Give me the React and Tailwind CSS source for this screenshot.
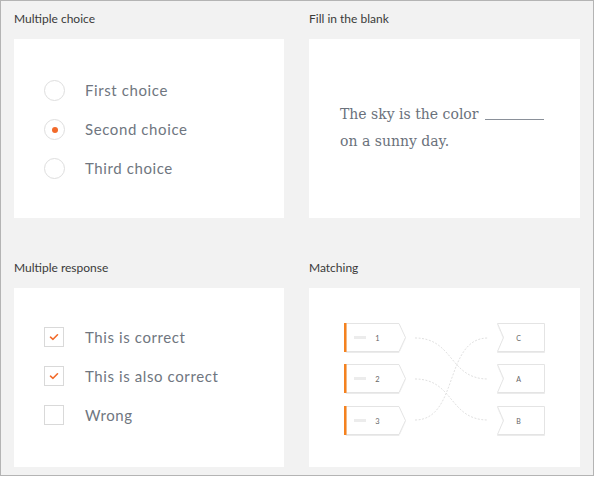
const LEFT = [
  { n: '1', y: 35 },
  { n: '2', y: 76 },
  { n: '3', y: 118 },
]
const RIGHT = [
  { l: 'C', y: 35 },
  { l: 'A', y: 76 },
  { l: 'B', y: 118 },
]

function Title({ children }) {
  return <div className="h-5 leading-5 text-[12px] text-[#3a3a3a] mb-[10px]">{children}</div>
}

function Panel({ children, className = '' }) {
  return <div className={'bg-white h-[179px] ' + className}>{children}</div>
}

function Radio({ checked }) {
  return (
    <span className="w-[21px] h-[21px] rounded-full border-[1.5px] border-[#dedede] flex items-center justify-center shrink-0">
      {checked && <span className="w-[6px] h-[6px] rounded-full bg-[#f26a2a]" />}
    </span>
  )
}

function Check({ checked }) {
  return (
    <span className="w-[20px] h-[20px] border border-[#d9d9d9] flex items-center justify-center shrink-0">
      {checked && (
        <svg width="10" height="8" viewBox="0 0 10 8">
          <path d="M1.5 4.2 L4 6.3 L8.5 1.8" fill="none" stroke="#f26a2a" strokeWidth="1.6" strokeLinecap="round" strokeLinejoin="round" />
        </svg>
      )}
    </span>
  )
}

function Matching() {
  return (
    <svg width="271" height="180" viewBox="0 0 271 180" className="block">
      <defs>
        <filter id="sh" x="-20%" y="-20%" width="140%" height="160%">
          <feDropShadow dx="0" dy="1" stdDeviation="0.6" floodColor="#000" floodOpacity="0.08" />
        </filter>
      </defs>
      {/* connectors */}
      <g fill="none" stroke="#dcdcdc" strokeWidth="0.9" strokeDasharray="2 1.5">
        <path d="M106 50 C 145 50, 140 91, 179 91" />
        <path d="M106 91 C 145 91, 140 132, 179 132" />
        <path d="M106 132 C 150 132, 135 50, 179 50" />
      </g>
      {LEFT.map(({ n, y }) => (
        <g key={n}>
          <path
            d={`M37 ${y + 0.5} H90 L96.5 ${y + 14.5} L90 ${y + 28.5} H37 Z`}
            fill="#fff"
            stroke="#e4e4e4"
            filter="url(#sh)"
          />
          <rect x="35" y={y} width="2.5" height="29" fill="#f5821f" />
          <rect x="45" y={y + 13} width="12" height="3" fill="#ececec" />
          <text x="68.5" y={y + 18} fontSize="7.5" fill="#666" textAnchor="middle" fontFamily="Lato, sans-serif">{n}</text>
        </g>
      ))}
      {RIGHT.map(({ l, y }) => (
        <g key={l}>
          <path
            d={`M188.5 ${y + 0.5} H235.5 V${y + 28.5} H188.5 L194.5 ${y + 14.5} Z`}
            fill="#fff"
            stroke="#e4e4e4"
            filter="url(#sh)"
          />
          <text x="209.5" y={y + 17.5} fontSize="7" fill="#666" textAnchor="middle" fontFamily="Lato, sans-serif">{l}</text>
        </g>
      ))}
    </svg>
  )
}

export default function App() {
  return (
    <div className="w-[595px] h-[477px] bg-white">
      <div
        className="w-[594px] h-[476px] border border-[#b4b4b4] bg-[#f2f2f2] pl-[13px] pt-[8px] grid grid-cols-[270px_271px] gap-x-[25px] gap-y-[40px] content-start"
        style={{ fontFamily: 'Lato, "Open Sans", sans-serif' }}
      >
        <div>
          <Title>Multiple choice</Title>
          <Panel className="pl-[30px] pt-[41px] flex flex-col gap-[18px]">
            {['First choice', 'Second choice', 'Third choice'].map((t, i) => (
              <div key={t} className="flex items-center gap-[20px] h-[21px]">
                <Radio checked={i === 1} />
                <span className="text-[15px] text-[#6f7680] tracking-[0.6px]">{t}</span>
              </div>
            ))}
          </Panel>
        </div>

        <div>
          <Title>Fill in the blank</Title>
          <Panel className="pl-[31px] pt-[62px]">
            <div className="text-[14px] leading-[27px] text-[#6a717b]" style={{ fontFamily: '"DejaVu Serif", serif' }}>
              <div className="flex items-end">
                <span>The sky is the color</span>
                <span className="ml-[7px] mb-[8px] w-[59px] border-b border-[#8a9099]" />
              </div>
              <div>on a sunny day.</div>
            </div>
          </Panel>
        </div>

        <div>
          <Title>Multiple response</Title>
          <Panel className="pl-[30px] pt-[39px] flex flex-col gap-[19px]">
            {['This is correct', 'This is also correct', 'Wrong'].map((t, i) => (
              <div key={t} className="flex items-center gap-[21px] h-[20px]">
                <Check checked={i < 2} />
                <span className="text-[15px] text-[#6f7680] tracking-[0.6px]">{t}</span>
              </div>
            ))}
          </Panel>
        </div>

        <div>
          <Title>Matching</Title>
          <Panel>
            <Matching />
          </Panel>
        </div>
      </div>
    </div>
  )
}
